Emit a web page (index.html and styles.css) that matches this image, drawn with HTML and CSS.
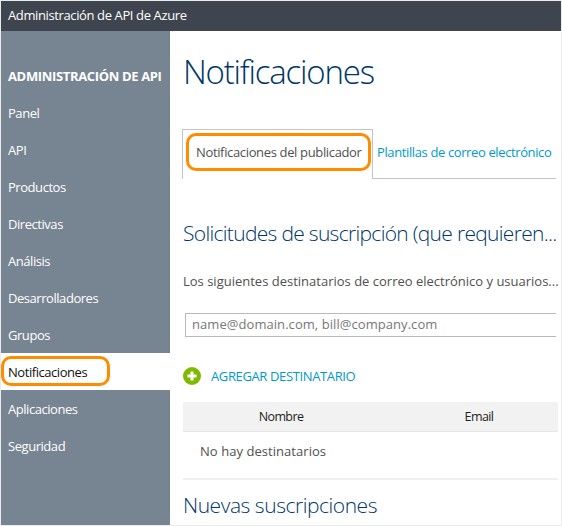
FILE: index.html
```html
<!DOCTYPE html>
<html lang="es">
<head>
<meta charset="utf-8">
<title>Administración de API de Azure</title>
<link rel="stylesheet" href="styles.css">
</head>
<body>
<div class="window">
  <header class="topbar">Administración de API de Azure</header>
  <div class="body">
    <nav class="sidebar">
      <div class="sidebar-title">ADMINISTRACIÓN DE API</div>
      <a class="item">Panel</a>
      <a class="item">API</a>
      <a class="item">Productos</a>
      <a class="item">Directivas</a>
      <a class="item">Análisis</a>
      <a class="item">Desarrolladores</a>
      <a class="item">Grupos</a>
      <a class="item active">Notificaciones</a>
      <a class="item">Aplicaciones</a>
      <a class="item">Seguridad</a>
    </nav>
    <main class="content">
      <h1>Notificaciones</h1>
      <div class="tabs">
        <div class="tab selected"><span class="highlight">Notificaciones del publicador</span></div>
        <div class="tab link"><span>Plantillas de correo electrónico</span></div>
      </div>
      <h2 class="requests">Solicitudes de suscripción (que requieren...</h2>
      <p class="intro">Los siguientes destinatarios de correo electrónico y usuarios...</p>
      <div class="field">name@domain.com, bill@company.com</div>
      <div class="add">
        <svg class="plus" width="18" height="18" viewBox="0 0 18 18"><circle cx="9" cy="9" r="9" fill="#7fba00"/><path d="M9 4.5v9M4.5 9h9" stroke="#fff" stroke-width="3"/></svg>
        <span>AGREGAR DESTINATARIO</span>
      </div>
      <div class="thead"><span>Nombre</span><span class="email">Email</span></div>
      <div class="empty">No hay destinatarios</div>
      <h2 class="new">Nuevas suscripciones</h2>
    </main>
  </div>
</div>
</body>
</html>
```
FILE: styles.css
```css
*, *::after { box-sizing: border-box; }
body {
  margin: 0;
  font-family: "Open Sans", "Noto Sans", sans-serif;
  font-size: 13px;
  color: #505050;
  background: #fff;
}
.window {
  width: 562px;
  height: 526px;
  border: 1px solid #ebebeb;
  overflow: hidden;
  white-space: nowrap;
}
.topbar {
  height: 30px;
  padding-left: 7px;
  line-height: 29px;
  background: #3e454f;
  color: #fff;
  letter-spacing: -0.38px;
}
.body { display: flex; height: 494px; }
.sidebar {
  width: 169px;
  flex: none;
  padding-top: 27px;
  background: #778492;
  color: #fff;
}
.sidebar-title {
  height: 36px;
  padding-left: 7px;
  line-height: 36px;
  font-weight: 700;
  letter-spacing: -0.35px;
}
.item {
  display: flex;
  align-items: center;
  height: 37px;
  padding: 0 0 0 7px;
  letter-spacing: -0.45px;
}
.item.active { position: relative; background: #fff; color: #111; }
.item.active::after {
  content: "";
  position: absolute;
  left: 0;
  top: 3px;
  width: 109px;
  height: 30px;
  border: 3px solid #ff8c00;
  border-radius: 10px;
}
.content { flex: 1; min-width: 0; padding: 0 3px 0 12px; }
h1, h2, p { margin: 0; }
h1, h2 { font-weight: 300; color: #003667; }
h1 {
  height: 98px;
  padding-left: 1px;
  line-height: 82px;
  font-size: 33px;
  letter-spacing: -1.2px;
}
.tabs { display: flex; height: 50px; margin-right: 2px; }
.tab { display: flex; align-items: center; }
.tab.selected {
  width: 191px;
  padding: 0 0 5px 3px;
  border: 1px solid #c4c4c4;
  border-bottom: 0;
}
.highlight {
  width: 185px;
  height: 38px;
  padding-left: 7px;
  line-height: 32px;
  border: 3px solid #ff8c00;
  border-radius: 10px;
  letter-spacing: -0.35px;
}
.tab.link {
  flex: 1;
  padding: 0 0 3px 4px;
  border-bottom: 1px solid #c4c4c4;
  color: #0099cc;
  letter-spacing: -0.38px;
}
h2 { font-size: 21px; padding-left: 1px; letter-spacing: -0.69px; }
.requests { height: 77px; line-height: 108px; }
.intro {
  height: 57px;
  padding-left: 1px;
  line-height: 51px;
}
.field {
  height: 24px;
  margin: 0 2px 0 3px;
  padding-left: 6px;
  line-height: 21px;
  border: 1px solid #bababa;
  border-right: 0;
  color: #777;
  letter-spacing: 0.06px;
}
.add {
  display: flex;
  align-items: center;
  gap: 10px;
  height: 65px;
  padding: 13px 0 0 1px;
  color: #0099cc;
  letter-spacing: -0.37px;
}
.thead {
  display: grid;
  grid-template-columns: 196px 1fr;
  height: 30px;
  margin-left: 1px;
  line-height: 29px;
  text-align: center;
  background: #f2f2f2;
  border-bottom: 1px solid #e6e6e6;
  color: #222;
  font-size: 12.5px;
  letter-spacing: -0.6px;
}
.email { padding-left: 21px; }
.empty {
  height: 48px;
  margin-left: 1px;
  padding-left: 17px;
  line-height: 38px;
  border-bottom: 2px solid #f0f0f0;
  letter-spacing: 0.05px;
}
.new { line-height: 51px; letter-spacing: -0.46px; }
```
